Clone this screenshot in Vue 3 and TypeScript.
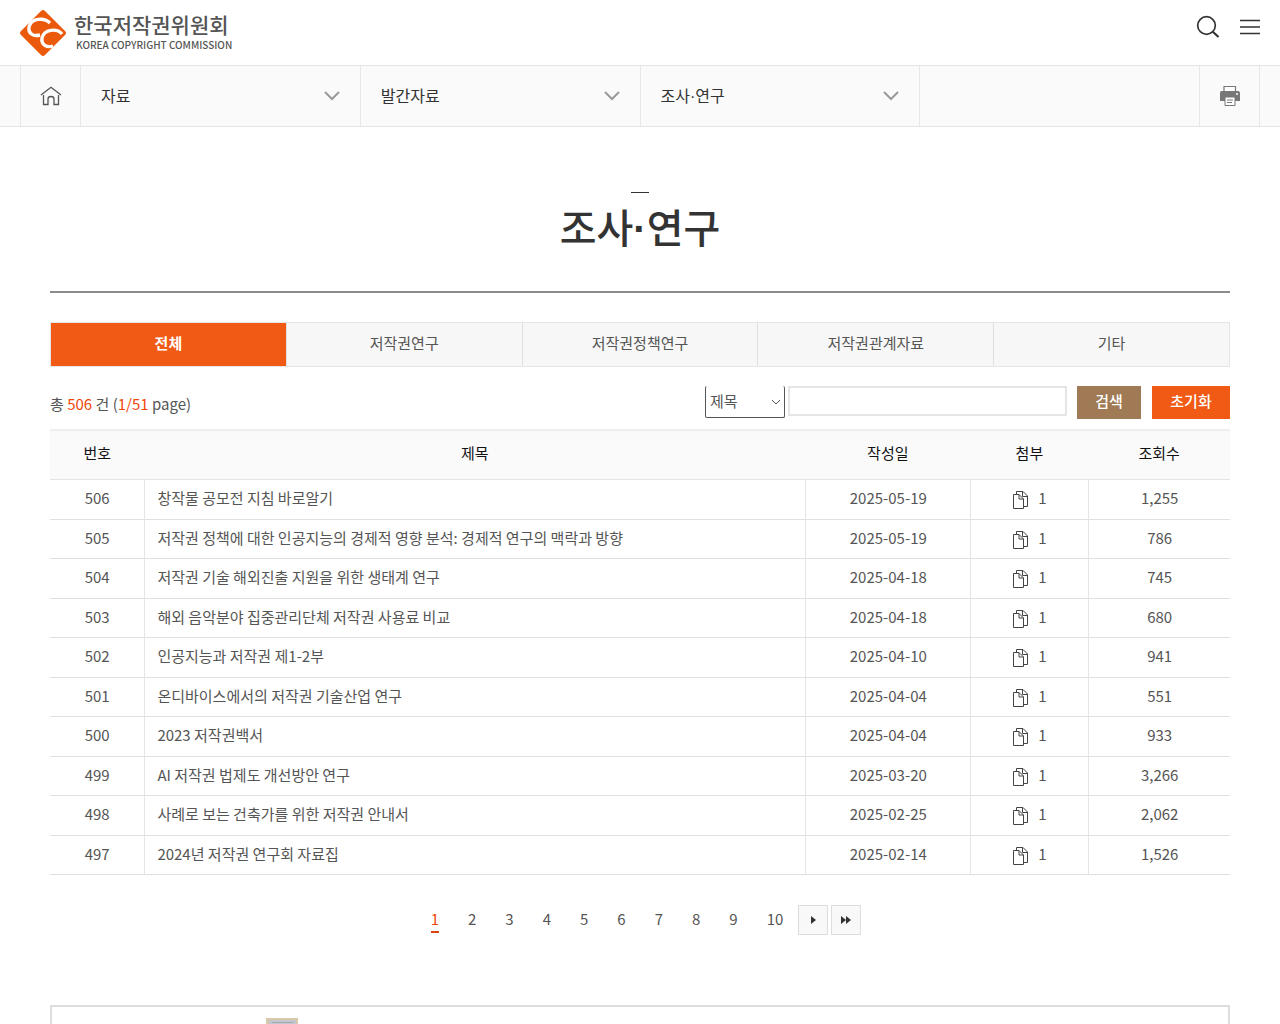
<script setup lang="ts">
import { ref } from 'vue'

interface Post {
  no: number
  title: string
  date: string
  files: number
  views: string
}

const crumbs = [['자료'], ['발간자료'], ['조사', '연구']]
const tabs = ['전체', '저작권연구', '저작권정책연구', '저작권관계자료', '기타']
const activeTab = ref(0)
const field = ref('제목')
const keyword = ref('')
const page = ref(1)

const posts: Post[] = [
  { no: 506, title: '창작물 공모전 지침 바로알기', date: '2025-05-19', files: 1, views: '1,255' },
  { no: 505, title: '저작권 정책에 대한 인공지능의 경제적 영향 분석: 경제적 연구의 맥락과 방향', date: '2025-05-19', files: 1, views: '786' },
  { no: 504, title: '저작권 기술 해외진출 지원을 위한 생태계 연구', date: '2025-04-18', files: 1, views: '745' },
  { no: 503, title: '해외 음악분야 집중관리단체 저작권 사용료 비교', date: '2025-04-18', files: 1, views: '680' },
  { no: 502, title: '인공지능과 저작권 제1-2부', date: '2025-04-10', files: 1, views: '941' },
  { no: 501, title: '온디바이스에서의 저작권 기술산업 연구', date: '2025-04-04', files: 1, views: '551' },
  { no: 500, title: '2023 저작권백서', date: '2025-04-04', files: 1, views: '933' },
  { no: 499, title: 'AI 저작권 법제도 개선방안 연구', date: '2025-03-20', files: 1, views: '3,266' },
  { no: 498, title: '사례로 보는 건축가를 위한 저작권 안내서', date: '2025-02-25', files: 1, views: '2,062' },
  { no: 497, title: '2024년 저작권 연구회 자료집', date: '2025-02-14', files: 1, views: '1,526' },
]

function reset() {
  field.value = '제목'
  keyword.value = ''
}
</script>

<template>
  <div class="page">
    <header class="header">
      <a href="#" class="logo">
        <svg class="logo-mark" width="46" height="46" viewBox="0 0 46 46" aria-hidden="true">
          <path d="M21 1Q23 -1 25 1L45 21Q47 23 45 25L25 45Q23 47 21 45L1 25Q-1 23 1 21Z" fill="#eb5a0c" />
          <g fill="none" stroke="#fff" stroke-width="3.4">
            <path d="M30 13C24 7 11 8 9 17C8 23 13 27 20 25" />
            <path d="M42 24C37 18 24 19 22 28C21 35 27 38 33 36" />
          </g>
        </svg>
        <span class="logo-text">
          <span class="logo-ko">한국저작권위원회</span>
          <span class="logo-en">KOREA COPYRIGHT COMMISSION</span>
        </span>
      </a>
      <div class="tools">
        <button type="button" aria-label="검색 열기">
          <svg width="24" height="24" viewBox="0 0 24 24" fill="none" stroke="#333">
            <circle cx="10.500" cy="10.500" r="8.800" stroke-width="1.700" />
            <path d="M16.500 16.500L22.500 22" stroke-width="2.200" />
          </svg>
        </button>
        <button type="button" aria-label="전체메뉴">
          <svg width="20" height="24" viewBox="0 0 20 24" fill="none" stroke="#333" stroke-width="1.600">
            <path d="M0 5.500H20M0 12H20M0 18.500H20" />
          </svg>
        </button>
      </div>
    </header>

    <nav class="crumbs" aria-label="현재 위치">
      <a href="#" class="square" aria-label="홈">
        <svg width="22" height="20" viewBox="0 0 22 20" fill="none" stroke="#555" stroke-width="1.300">
          <path d="M1 9L11 1.200L21 9M3.500 9V18.500H8V13Q8 10.500 11 10.500T14 13V18.500H18.500V9" />
        </svg>
      </a>
      <button v-for="c in crumbs" :key="c[0]" type="button" class="crumb">
        <span><template v-for="(part, i) in c" :key="part"><span v-if="i" class="dot">·</span>{{ part }}</template></span>
        <svg width="16" height="10" viewBox="0 0 16 10" fill="none" stroke="#999" stroke-width="2">
          <path d="M1 1L8 8L15 1" />
        </svg>
      </button>
      <span class="blank"></span>
      <button type="button" class="square" aria-label="인쇄">
        <svg width="22" height="22" viewBox="0 0 22 22">
          <path d="M5 6V1.500H16.500V6" fill="#fff" stroke="#777" stroke-width="1.200" />
          <path d="M2.500 6H19Q21 6 21 8V16H1V8Q1 6 2.500 6Z" fill="#777" />
          <circle cx="18" cy="9" r="1" fill="#fff" />
          <path d="M6 12H16V20.500H6Z" fill="#fff" stroke="#777" />
          <path d="M8 15H14M8 17.500H13" stroke="#777" />
        </svg>
      </button>
    </nav>

    <main class="content">
      <h1><span>조사<span class="dot">·</span>연구</span></h1>

      <div class="tabs" role="tablist">
        <button
          v-for="(t, i) in tabs"
          :key="t"
          type="button"
          role="tab"
          :aria-selected="i === activeTab"
          :class="{ active: i === activeTab }"
          @click="activeTab = i"
        >{{ t }}</button>
      </div>

      <div class="bar">
        <p class="count">총 <em>506</em> 건 (<em>1/51</em> page)</p>
        <form class="search" @submit.prevent>
          <span class="select">
            <select v-model="field" aria-label="검색 조건">
              <option>제목</option>
              <option>내용</option>
            </select>
            <svg width="10" height="6" viewBox="0 0 10 6" fill="none" stroke="#555">
              <path d="M1 1L5 5L9 1" />
            </svg>
          </span>
          <input v-model="keyword" type="text" aria-label="검색어" />
          <button type="submit" class="find">검색</button>
          <button type="button" class="reset" @click="reset">초기화</button>
        </form>
      </div>

      <table class="board">
        <colgroup>
          <col class="c-no" /><col class="c-title" /><col class="c-date" /><col class="c-file" /><col class="c-views" />
        </colgroup>
        <thead>
          <tr>
            <th scope="col">번호</th>
            <th scope="col">제목</th>
            <th scope="col">작성일</th>
            <th scope="col">첨부</th>
            <th scope="col">조회수</th>
          </tr>
        </thead>
        <tbody>
          <tr v-for="p in posts" :key="p.no">
            <td>{{ p.no }}</td>
            <td class="title"><a href="#">{{ p.title }}</a></td>
            <td>{{ p.date }}</td>
            <td>
              <span class="file">
                <svg width="15" height="18" viewBox="0 0 15 18" fill="none" stroke="#444">
                  <path d="M3.500 3.500V0.500H10L14.500 5V15.500H10.500" />
                  <path d="M9.500 0.500V5.500H14" />
                  <path d="M0.500 3.500H6L10.500 8V17.500H0.500Z" fill="#fff" />
                  <path d="M6 3.500V8H10.500" />
                </svg>
                {{ p.files }}
              </span>
            </td>
            <td>{{ p.views }}</td>
          </tr>
        </tbody>
      </table>

      <nav class="pages" aria-label="페이지">
        <a v-for="n in 10" :key="n" href="#" :class="{ current: n === page }" @click.prevent="page = n"><span>{{ n }}</span></a>
        <button type="button" aria-label="다음 페이지">
          <svg width="5" height="8" viewBox="0 0 5 8"><path d="M0 0L5 4L0 8Z" fill="#333" /></svg>
        </button>
        <button type="button" aria-label="마지막 페이지">
          <svg width="10" height="8" viewBox="0 0 10 8"><path d="M0 0L5 4L0 8ZM5 0L10 4L5 8Z" fill="#333" /></svg>
        </button>
      </nav>

      <section class="notice">
        <svg class="seal" width="32" height="40" viewBox="0 0 32 40" aria-hidden="true">
          <rect width="32" height="40" fill="#d9c8ab" />
          <rect x="3" y="2" width="27" height="38" fill="#c3c6cd" />
          <path d="M6 4.500H27" stroke="#a3a8b2" />
        </svg>
      </section>
    </main>
  </div>
</template>

<style>
body {
  margin: 0;
  background: #fff;
}
</style>

<style scoped>
.page {
  height: 100vh;
  overflow: hidden;
  font-family: "Noto Sans CJK KR", "Noto Sans", sans-serif;
  font-size: 15px;
  line-height: 1.5;
  color: #555;
}
.page * {
  box-sizing: border-box;
}
a {
  color: inherit;
  text-decoration: none;
}
button,
input,
select {
  margin: 0;
  padding: 0;
  border: 0;
  border-radius: 0;
  background: none;
  font: inherit;
  color: inherit;
}
svg {
  display: block;
  flex: none;
}
.dot {
  font-family: "Liberation Sans", Arial, sans-serif;
  line-height: 1;
}
.header {
  display: flex;
  justify-content: space-between;
  height: 65px;
  padding: 0 20px;
}
.logo {
  display: flex;
  align-items: flex-start;
  gap: 8px;
  padding-top: 10px;
}
.logo-text {
  display: flex;
  flex-direction: column;
  color: #555;
}
.logo-ko {
  font-size: 21px;
  line-height: 29px;
  font-weight: 500;
}
.logo-en {
  padding-left: 2px;
  font-size: 10px;
  line-height: 12px;
  font-weight: 500;
}
.tools {
  display: flex;
  align-items: center;
  gap: 20px;
  height: 54px;
}
.crumbs {
  display: flex;
  height: 62px;
  padding: 0 20px;
  border: solid #e5e5e5;
  border-width: 1px 0;
  background: #fafafa;
}
.square {
  display: flex;
  align-items: center;
  justify-content: center;
  width: 60px;
  border-left: 1px solid #e8e8e8;
}
.square:last-child {
  width: 61px;
  border-right: 1px solid #e8e8e8;
}
.crumb,
.blank {
  flex: 1;
  padding: 0 20px;
  border-left: 1px solid #e8e8e8;
}
.crumb {
  display: flex;
  align-items: center;
  justify-content: space-between;
  font-size: 16px;
  color: #333;
}
.crumb > span {
  padding-bottom: 2px;
}
.content {
  padding: 65px 50px 0;
}
h1 {
  display: flex;
  flex-direction: column;
  align-items: center;
  margin: 0;
  padding-bottom: 32px;
  border-bottom: 2px solid #8c8c8c;
  font-size: 40px;
  line-height: 66px;
  font-weight: 500;
  color: #333;
}
h1::before {
  content: "";
  width: 18px;
  height: 1px;
  background: #333;
}
h1 .dot {
  font-weight: 700;
}
.tabs {
  display: flex;
  margin-top: 29px;
  border: 1px solid #e5e5e5;
  background: #f7f7f7;
}
.tabs button {
  flex: 1;
  height: 43px;
  padding-bottom: 2px;
  border-left: 1px solid #e0e0e0;
}
.tabs button:first-child {
  border-left: 0;
}
.tabs .active {
  background: #f15a14;
  color: #fff;
  font-weight: 700;
}
.bar {
  display: flex;
  justify-content: space-between;
  align-items: center;
  height: 33px;
  margin: 19px 0 10px;
}
.count {
  margin: 0;
  padding-top: 4px;
}
.count em {
  font-style: normal;
  color: #f0470b;
}
.search {
  display: flex;
  height: 33px;
}
.select {
  display: grid;
  align-items: center;
  width: 80px;
  height: 32px;
  margin-right: 3px;
}
.select select {
  grid-area: 1 / 1;
  width: 100%;
  height: 32px;
  padding-left: 4px;
  appearance: none;
  border: solid #555;
  border-width: 0 1px 1px;
  border-radius: 2px;
}
.select svg {
  grid-area: 1 / 1;
  justify-self: end;
  margin-right: 4px;
  pointer-events: none;
}
.search input {
  width: 279px;
  height: 30px;
  margin-right: 10px;
  padding: 0 8px;
  border: 2px solid #e5e5e5;
}
.search button {
  padding-bottom: 2px;
  font-weight: 500;
  color: #fff;
}
.search .find {
  width: 64px;
  margin-right: 11px;
  background: #9f7a55;
}
.search .reset {
  width: 78px;
  background: #f15a14;
}
.board {
  width: 100%;
  table-layout: fixed;
  border-collapse: separate;
  border-spacing: 0;
  text-align: center;
}
.c-no { width: 8%; }
.c-title { width: 56%; }
.c-date { width: 14%; }
.c-file { width: 10%; }
.c-views { width: 12%; }
th {
  height: 51px;
  padding: 0 0 4px;
  border-top: 2px solid #eee;
  border-bottom: 1px solid #e5e5e5;
  background: #fafafa;
  font-weight: 400;
  color: #111;
}
td {
  padding: 7px 12px 9px;
  border-bottom: 1px solid #e0e0e0;
}
td + td {
  border-left: 1px solid #e5e5e5;
}
.title {
  text-align: left;
}
.file {
  display: flex;
  justify-content: center;
  gap: 10px;
}
.file svg {
  margin-top: 4px;
  margin-bottom: -4px;
}
.pages {
  display: flex;
  justify-content: center;
  gap: 3px;
  margin-top: 30px;
}
.pages a {
  padding: 3px 12px 0;
}
.pages a + a {
  margin-left: 2px;
}
.pages span {
  display: block;
  height: 25px;
}
.pages .current span {
  border-bottom: 2px solid #d9480f;
  color: #f0470b;
}
.pages button {
  display: flex;
  align-items: center;
  justify-content: center;
  width: 30px;
  height: 30px;
  border: 1px solid #ddd;
  background: #f8f8f8;
}
.notice {
  height: 150px;
  margin-top: 70px;
  padding: 11px 214px;
  border: 2px solid #ddd;
}
</style>
